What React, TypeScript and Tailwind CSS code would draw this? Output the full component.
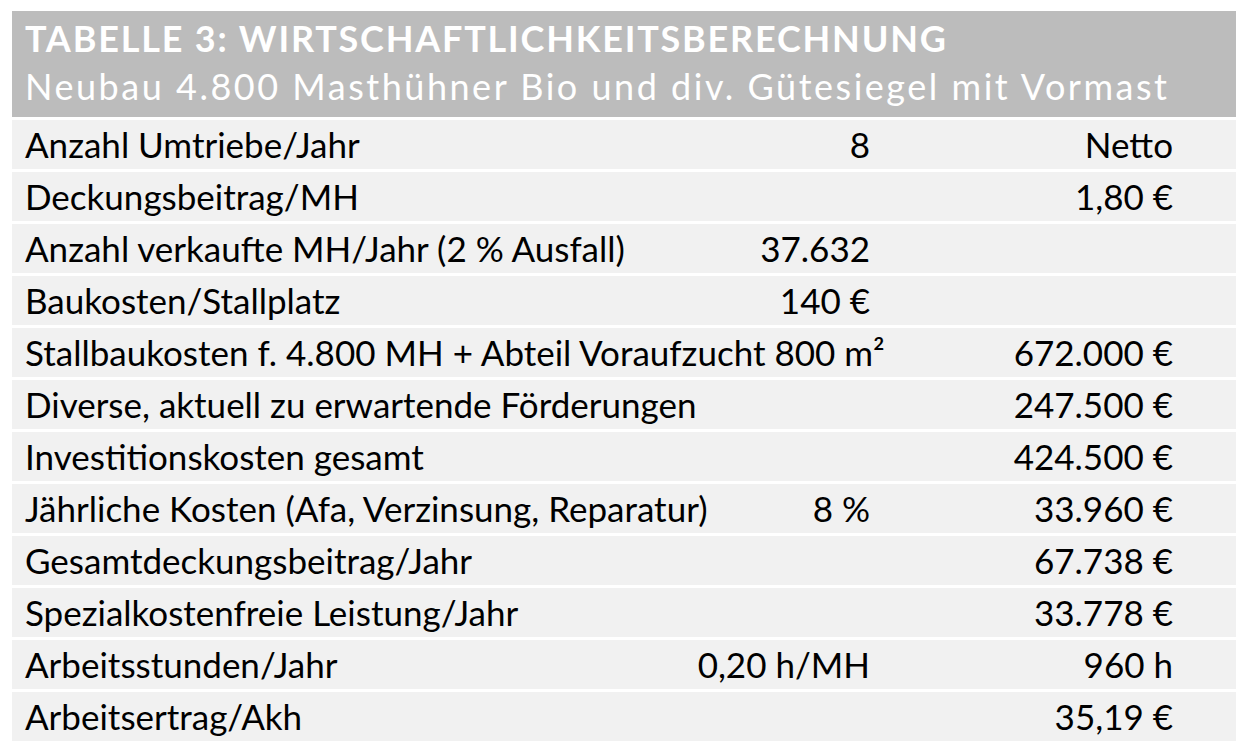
const rows: [string, string, string][] = [
  ['Anzahl Umtriebe/Jahr', '8', 'Netto'],
  ['Deckungsbeitrag/MH', '', '1,80 €'],
  ['Anzahl verkaufte MH/Jahr (2 % Ausfall)', '37.632', ''],
  ['Baukosten/Stallplatz', '140 €', ''],
  ['Stallbaukosten f. 4.800 MH + Abteil Voraufzucht 800 m²', '', '672.000 €'],
  ['Diverse, aktuell zu erwartende Förderungen', '', '247.500 €'],
  ['Investitionskosten gesamt', '', '424.500 €'],
  ['Jährliche Kosten (Afa, Verzinsung, Reparatur)', '8 %', '33.960 €'],
  ['Gesamtdeckungsbeitrag/Jahr', '', '67.738 €'],
  ['Spezialkostenfreie Leistung/Jahr', '', '33.778 €'],
  ['Arbeitsstunden/Jahr', '0,20 h/MH', '960 h'],
  ['Arbeitsertrag/Akh', '', '35,19 €'],
];

export default function App() {
  return (
    <div className="min-h-screen bg-white pt-[11px] pl-[12px] font-['Lato',sans-serif]">
      <div className="w-[1224px] flex flex-col gap-[3px]">
        {/* Header */}
        <div className="h-[106px] bg-[#bcbcbc] px-[13px] pt-[7px] text-white whitespace-nowrap">
          <div className="text-[36px] leading-[40px] font-bold tracking-[0.05em]">
            TABELLE 3: WIRTSCHAFTLICHKEITSBERECHNUNG
          </div>
          <div className="mt-[8px] text-[36px] leading-[40px] tracking-[0.07em]">
            Neubau 4.800 Masthühner Bio und div. Gütesiegel mit Vormast
          </div>
        </div>

        {/* Rows */}
        {rows.map(([label, mid, right]) => (
          <div
            key={label}
            className="h-[49px] bg-[#f1f1f1] flex items-center pl-[13px] pr-[63px] text-[35px] text-black"
          >
            <div className="flex-1 min-w-0 whitespace-nowrap">{label}</div>
            <div className="w-[200px] shrink-0 text-right whitespace-nowrap">{mid}</div>
            <div className="w-[303px] shrink-0 text-right whitespace-nowrap">{right}</div>
          </div>
        ))}
      </div>
    </div>
  );
}
